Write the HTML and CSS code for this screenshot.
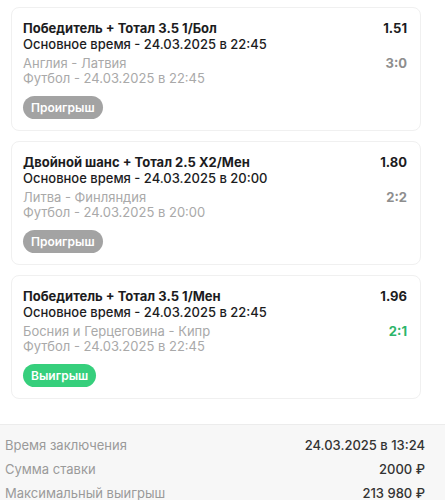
FILE: index.html
```html
<!DOCTYPE html>
<html lang="ru">
  <head>
    <meta charset="UTF-8" />
    <meta name="viewport" content="width=device-width, initial-scale=1.0" />
    <title>Купон</title>
    <link rel="stylesheet" href="styles.css">
  </head>
  <body>
    <div class="bets">
      <!-- Событие 1 -->
      <div class="bet-card">
        <div class="bet-row">
          <div class="bet-title">Победитель + Тотал 3.5 1/Бол</div>
          <div class="bet-odd">1.51</div>
        </div>
        <div class="bet-sub">Основное время - 24.03.2025 в 22:45</div>
        <div class="bet-info">
          <div class="bet-row">
            <div>Англия - Латвия</div>
            <div class="bet-score">3:0</div>
          </div>
          <div>Футбол - 24.03.2025 в 22:45</div>
        </div>
        <span class="status status-lose">Проигрыш</span>
      </div>

      <!-- Событие 2 -->
      <div class="bet-card">
        <div class="bet-row">
          <div class="bet-title">Двойной шанс + Тотал 2.5 X2/Мен</div>
          <div class="bet-odd">1.80</div>
        </div>
        <div class="bet-sub">Основное время - 24.03.2025 в 20:00</div>
        <div class="bet-info">
          <div class="bet-row">
            <div>Литва - Финляндия</div>
            <div class="bet-score">2:2</div>
          </div>
          <div>Футбол - 24.03.2025 в 20:00</div>
        </div>
        <span class="status status-lose">Проигрыш</span>
      </div>

      <!-- Событие 3 -->
      <div class="bet-card">
        <div class="bet-row">
          <div class="bet-title">Победитель + Тотал 3.5 1/Мен</div>
          <div class="bet-odd">1.96</div>
        </div>
        <div class="bet-sub">Основное время - 24.03.2025 в 22:45</div>
        <div class="bet-info">
          <div class="bet-row">
            <div>Босния и Герцеговина - Кипр</div>
            <div class="bet-score bet-score-win">2:1</div>
          </div>
          <div>Футбол - 24.03.2025 в 22:45</div>
        </div>
        <span class="status status-win">Выигрыш</span>
      </div>
    </div>

    <!-- Итоги купона -->
    <div class="summary">
      <div class="summary-row">
        <span class="summary-label">Время заключения</span>
        <span class="summary-value">24.03.2025 в 13:24</span>
      </div>
      <div class="summary-row">
        <span class="summary-label">Сумма ставки</span>
        <span class="summary-value">2000 ₽</span>
      </div>
      <div class="summary-row">
        <span class="summary-label">Максимальный выигрыш</span>
        <span class="summary-value">213 980 ₽</span>
      </div>
    </div>
  </body>
</html>
```

FILE: styles.css
```css
* {
  box-sizing: border-box;
  margin: 0;
  padding: 0;
}

body {
  font-family: "Inter", "Roboto", sans-serif;
  font-size: 13px;
  background-color: #fff;
  color: #1c1c1e;
}

.bets {
  display: flex;
  flex-direction: column;
  gap: 10px;
  padding: 7px 24px 25px 11px;
}

.bet-card {
  padding: 12px 13px 11px 11px;
  border: 1px solid #f0f0f0;
  border-radius: 8px;
  background-color: #fff;
}

.bet-row {
  display: flex;
  justify-content: space-between;
  align-items: baseline;
}

.bet-title,
.bet-odd {
  font-weight: 700;
  line-height: 16px;
}

.bet-sub {
  font-weight: 500;
  line-height: 16px;
}

.bet-info {
  margin-top: 4px;
  color: #a9a9a9;
  line-height: 15px;
}

.bet-score {
  font-weight: 700;
  color: #8e8e8e;
}

.bet-score-win {
  color: #2db56a;
}

.status {
  display: inline-block;
  margin-top: 10px;
  padding: 0 8px;
  height: 23px;
  line-height: 23px;
  border-radius: 12px;
  font-size: 12px;
  font-weight: 600;
  color: #fff;
}

.status-lose {
  background-color: #a3a3a3;
}

.status-win {
  background-color: #36cf7c;
}

.summary {
  padding: 8px 20px 0 5px;
  border-top: 1px solid #ececec;
  background-color: #f7f7f7;
  min-height: 80px;
}

.summary-row {
  display: flex;
  justify-content: space-between;
  line-height: 24px;
}

.summary-label {
  color: #9a9a9a;
}

.summary-value {
  font-weight: 500;
  color: #333;
}
```
